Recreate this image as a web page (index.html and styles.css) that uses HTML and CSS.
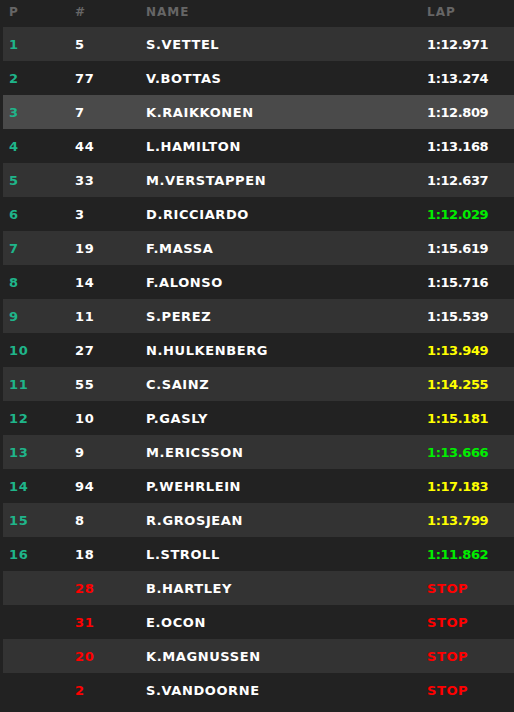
FILE: index.html
```html
<!DOCTYPE html>
<html>
<head>
<meta charset="utf-8">
<link rel="stylesheet" href="styles.css">
</head>
<body>
<div class="board">
  <div class="row head"><span>P</span><span>#</span><span>NAME</span><span>LAP</span></div>
  <div class="row odd"><span class="pos">1</span><span>5</span><span>S.VETTEL</span><span class="lap">1:12.971</span></div>
  <div class="row"><span class="pos">2</span><span>77</span><span>V.BOTTAS</span><span class="lap">1:13.274</span></div>
  <div class="row sel"><span class="pos">3</span><span>7</span><span>K.RAIKKONEN</span><span class="lap">1:12.809</span></div>
  <div class="row"><span class="pos">4</span><span>44</span><span>L.HAMILTON</span><span class="lap">1:13.168</span></div>
  <div class="row odd"><span class="pos">5</span><span>33</span><span>M.VERSTAPPEN</span><span class="lap">1:12.637</span></div>
  <div class="row"><span class="pos">6</span><span>3</span><span>D.RICCIARDO</span><span class="lap green">1:12.029</span></div>
  <div class="row odd"><span class="pos">7</span><span>19</span><span>F.MASSA</span><span class="lap">1:15.619</span></div>
  <div class="row"><span class="pos">8</span><span>14</span><span>F.ALONSO</span><span class="lap">1:15.716</span></div>
  <div class="row odd"><span class="pos">9</span><span>11</span><span>S.PEREZ</span><span class="lap">1:15.539</span></div>
  <div class="row"><span class="pos">10</span><span>27</span><span>N.HULKENBERG</span><span class="lap yellow">1:13.949</span></div>
  <div class="row odd"><span class="pos">11</span><span>55</span><span>C.SAINZ</span><span class="lap yellow">1:14.255</span></div>
  <div class="row"><span class="pos">12</span><span>10</span><span>P.GASLY</span><span class="lap yellow">1:15.181</span></div>
  <div class="row odd"><span class="pos">13</span><span>9</span><span>M.ERICSSON</span><span class="lap green">1:13.666</span></div>
  <div class="row"><span class="pos">14</span><span>94</span><span>P.WEHRLEIN</span><span class="lap yellow">1:17.183</span></div>
  <div class="row odd"><span class="pos">15</span><span>8</span><span>R.GROSJEAN</span><span class="lap yellow">1:13.799</span></div>
  <div class="row"><span class="pos">16</span><span>18</span><span>L.STROLL</span><span class="lap green">1:11.862</span></div>
  <div class="row odd"><span class="pos"></span><span class="red">28</span><span>B.HARTLEY</span><span class="red">STOP</span></div>
  <div class="row"><span class="pos"></span><span class="red">31</span><span>E.OCON</span><span class="red">STOP</span></div>
  <div class="row odd"><span class="pos"></span><span class="red">20</span><span>K.MAGNUSSEN</span><span class="red">STOP</span></div>
  <div class="row"><span class="pos"></span><span class="red">2</span><span>S.VANDOORNE</span><span class="red">STOP</span></div>
</div>
</body>
</html>
```
FILE: styles.css
```css
html, body {
  margin: 0;
  padding: 0;
  background: #222222;
}
body {
  width: 514px;
  height: 712px;
  overflow: hidden;
  font-family: "DejaVu Sans", sans-serif;
  font-weight: bold;
  color: #ffffff;
}
.board {
  display: flex;
  flex-direction: column;
}
.row {
  display: grid;
  grid-template-columns: 66px 71px 281px 1fr;
  align-items: center;
  height: 34px;
  margin-left: 3px;
  padding-left: 6px;
  font-size: 13px;
  letter-spacing: 0.6px;
}
.row.head {
  height: 27px;
  color: #666666;
  font-size: 12px;
  letter-spacing: 1px;
  padding-bottom: 3px;
  box-sizing: border-box;
}
.row.odd { background: #333333; }
.row.sel { background: #4a4a4a; }
.pos { color: #1fb58a; }
.lap { letter-spacing: -0.4px; }
.green { color: #00ee00; }
.yellow { color: #ffff00; }
.red { color: #ff0000; }
```
